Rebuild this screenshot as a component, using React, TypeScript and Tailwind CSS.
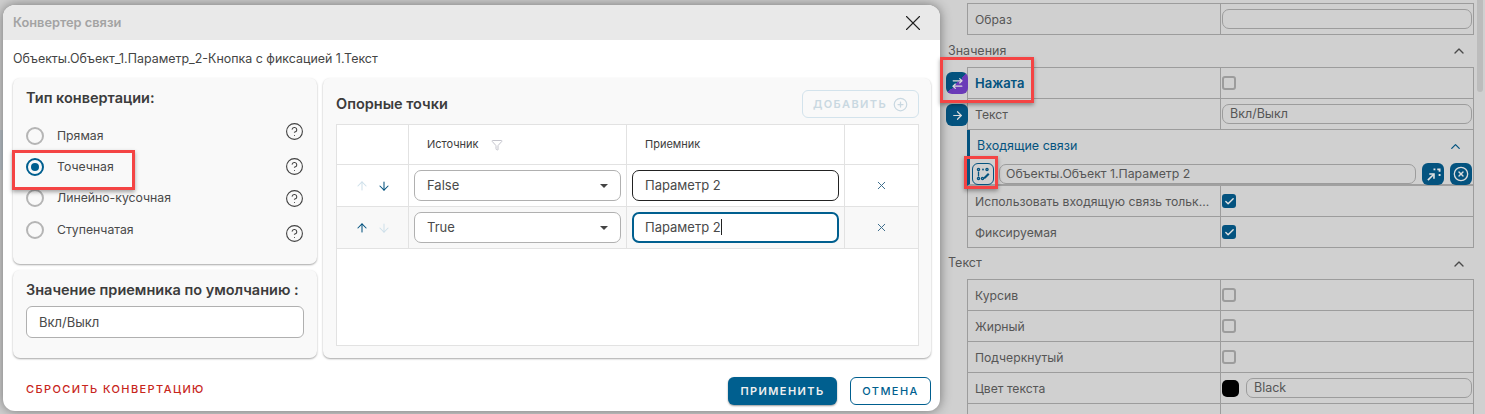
import { ArrowDown, ArrowRight, ArrowRightLeft, ArrowUp, Check, ChevronUp, CircleHelp, CirclePlus, CircleX, Funnel, X } from 'lucide-react';
import type { ReactNode } from 'react';

const font = { fontFamily: 'Inter, "Noto Sans", sans-serif' };

// Icon of the incoming link button: nodes, a path and a small pencil
function RouteEditIcon() {
  return (
    <svg width="14" height="14" viewBox="0 0 14 14" fill="none" stroke="currentColor" strokeWidth="1.3">
      <circle cx="2.5" cy="2.5" r="1.1" />
      <circle cx="2.5" cy="11.5" r="1.1" />
      <circle cx="6.5" cy="11.5" r="1.1" />
      <path d="M2.5 4.5v5" />
      <circle cx="7" cy="2.5" r="0.9" fill="currentColor" stroke="none" />
      <circle cx="11" cy="2.5" r="1.1" />
      <path d="M8 10l4-4 1.5 1.5-4 4-2 .5z" fill="currentColor" stroke="none" />
    </svg>
  );
}

// Arrow towards a dotted corner on the first blue button
function LinkTargetIcon() {
  return (
    <svg width="15" height="15" viewBox="0 0 16 16" fill="none" stroke="#e4e4e4" strokeWidth="1.7">
      <path d="M2 14l6-6" />
      <path d="M3.5 7.5h5v5" />
      <path d="M8 2.5h2M12 2.5h2.5V5M14.5 7.5v2" strokeWidth="2" />
    </svg>
  );
}

function Row({ label, children, blue }: { label: string; children?: ReactNode; blue?: boolean }) {
  return (
    <div className="flex h-[31px] border-b border-[#9c9c9c]">
      <div className={`w-[253px] shrink-0 whitespace-nowrap px-[7px] leading-[31px] border-r border-[#9c9c9c] ${blue ? 'text-[13px] font-semibold text-[#04537f]' : 'text-[12.2px] text-[#565656]'}`}>
        {label}
      </div>
      <div className="flex flex-1 items-center gap-[7px] px-[1px]">{children}</div>
    </div>
  );
}

function Box({ checked }: { checked?: boolean }) {
  if (checked) {
    return (
      <span className="flex h-[14px] w-[14px] items-center justify-center rounded-[3px] bg-[#04537f]">
        <Check size={11} strokeWidth={3} className="text-[#e2e2e2]" />
      </span>
    );
  }
  return <span className="h-[14px] w-[14px] rounded-[3px] border-2 border-[#9c9c9c]" />;
}

function Field({ text }: { text?: string }) {
  return (
    <div className="h-[20px] flex-1 rounded-[7px] border border-[#9c9c9c] px-[7px] text-[12.5px] leading-[18px] text-[#565656]">
      {text}
    </div>
  );
}

function SectionTitle({ title, height }: { title: string; height: string }) {
  return (
    <div className={`flex items-center justify-between pr-[7px] text-[12.5px] text-[#565656] ${height}`}>
      <span>{title}</span>
      <ChevronUp size={16} className="text-[#4a4a4a]" />
    </div>
  );
}

function PropertyPanel() {
  return (
    <div className="ml-[948px] w-[526px] pt-[3px]">
      <div className="ml-[19px] border border-[#9c9c9c] border-b-0">
        <Row label="Образ"><Field /></Row>
      </div>
      <SectionTitle title="Значения" height="h-[32px]" />
      <div className="relative ml-[19px] border border-[#9c9c9c] border-b-0">
        <div className="absolute left-[-22px] top-[4px] flex h-[22px] w-[22px] items-center justify-center rounded-[6px] bg-[linear-gradient(135deg,#04537f_50%,#6a3bb8_50%)]">
          <ArrowRightLeft size={13} strokeWidth={2.2} className="text-[#dcdcdc]" />
        </div>
        <div className="absolute left-[-22px] top-[36px] flex h-[22px] w-[22px] items-center justify-center rounded-[6px] bg-[#04537f]">
          <ArrowRight size={13} strokeWidth={2.2} className="text-[#dcdcdc]" />
        </div>
        <Row label="Нажата" blue><Box /></Row>
        <Row label="Текст"><Field text="Вкл/Выкл" /></Row>
        <div className="relative -ml-[1px] h-[56px] border-b-2 border-l-[3px] border-b-[#a0a0a0] border-l-[#04537f]">
          <div className="flex h-[33px] items-center justify-between pl-[7px] pr-[10px] text-[12.5px] text-[#04537f]">
            <span>Входящие связи</span>
            <ChevronUp size={15} />
          </div>
          <div className="flex items-center pl-[2px] pr-[1px]">
            <div className="flex h-[22px] w-[22px] items-center justify-center rounded-[6px] border border-[#04537f] text-[#04537f]">
              <RouteEditIcon />
            </div>
            <div className="ml-[5px] h-[20px] flex-1 truncate rounded-[7px] border border-[#9c9c9c] px-[6px] text-[12.3px] leading-[18px] text-[#565656]">
              Объекты.Объект 1.Параметр 2
            </div>
            <div className="ml-[6px] flex h-[22px] w-[22px] items-center justify-center rounded-[6px] bg-[#04537f]">
              <LinkTargetIcon />
            </div>
            <div className="ml-[6px] flex h-[22px] w-[22px] items-center justify-center rounded-[6px] bg-[#04537f]">
              <CircleX size={16} className="text-[#dcdcdc]" />
            </div>
          </div>
        </div>
        <Row label="Использовать входящую связь тольк..."><Box checked /></Row>
        <Row label="Фиксируемая"><Box checked /></Row>
      </div>
      <SectionTitle title="Текст" height="h-[31px]" />
      <div className="ml-[19px] border border-[#9c9c9c] border-b-0">
        <Row label="Курсив"><Box /></Row>
        <Row label="Жирный"><Box /></Row>
        <Row label="Подчеркнутый"><Box /></Row>
        <Row label="Цвет текста">
          <span className="h-[17px] w-[17px] rounded-[5px] bg-black" />
          <Field text="Black" />
        </Row>
        <Row label=""><div className="mt-[12px] w-full"><Field /></div></Row>
      </div>
    </div>
  );
}

function RadioOption({ label, checked, helpOffset }: { label: string; checked?: boolean; helpOffset: string }) {
  return (
    <div className="flex h-[31.4px] items-center text-[12.25px] text-[#4a4a4a]">
      {checked ? (
        <span className="flex h-[18px] w-[18px] items-center justify-center rounded-full border-2 border-[#005f8f]">
          <span className="h-[8px] w-[8px] rounded-full bg-[#005f8f]" />
        </span>
      ) : (
        <span className="h-[18px] w-[18px] rounded-full border-2 border-[#b5b5b5]" />
      )}
      <span className="ml-[13px] flex-1">{label}</span>
      <CircleHelp size={19} strokeWidth={1.4} className={`text-[#444] ${helpOffset}`} />
    </div>
  );
}

function SelectBox({ value }: { value: string }) {
  return (
    <div className="flex h-[31px] w-[207px] items-center justify-between rounded-[7px] border border-[#b0b0b0] bg-white pl-[12px] pr-[12px] text-[13px] text-[#4a4a4a]">
      <span>{value}</span>
      <span className="h-0 w-0 border-x-[4px] border-t-[4px] border-x-transparent border-t-[#444]" />
    </div>
  );
}

function PointRow({ value, upActive, focused, shaded }: { value: string; upActive?: boolean; focused?: boolean; shaded?: boolean }) {
  return (
    <div className={`flex h-[42px] border-b border-[#e2e2e2] ${shaded ? 'bg-[#f8f8f8]' : 'bg-white'}`}>
      <div className="flex w-[72px] items-center justify-center gap-[8px] border-r border-[#e2e2e2]">
        <ArrowUp size={14} strokeWidth={1.8} className={upActive ? 'text-[#04537f]' : 'text-[#cfe0ea]'} />
        <ArrowDown size={14} strokeWidth={1.8} className={upActive ? 'text-[#cfe0ea]' : 'text-[#04537f]'} />
      </div>
      <div className="flex w-[218px] items-center border-r border-[#e2e2e2] pl-[5px]">
        <SelectBox value={value} />
      </div>
      <div className="flex w-[218px] items-center border-r border-[#e2e2e2] pl-[5px]">
        <div className={`h-[31px] w-[207px] rounded-[7px] bg-white text-[13px] text-[#4a4a4a] ${focused ? 'border-2 border-[#005f8f] pl-[11px] leading-[27px]' : 'border border-[#222] pl-[12px] leading-[29px]'}`}>
          Параметр 2{focused && <span className="inline-block h-[16px] w-px translate-y-[3px] bg-[#222]" />}
        </div>
      </div>
      <div className="flex flex-1 items-center justify-center">
        <X size={13} strokeWidth={1.8} className="text-[#3b6b8a]" />
      </div>
    </div>
  );
}

function ConverterDialog() {
  return (
    <div className="absolute left-[3px] top-[5px] flex h-[406px] w-[937px] flex-col overflow-hidden rounded-[12px] bg-white shadow-[0_0_12px_rgba(0,0,0,0.45)]">
      <div className="flex h-[35px] shrink-0 items-center justify-between bg-[#e9e9e9] pl-[10px] pr-[14px]">
        <span className="text-[12.8px] font-semibold text-[#a3a3a3]">Конвертер связи</span>
        <X size={26} strokeWidth={1} className="text-[#222]" />
      </div>
      <div className="flex h-[38px] shrink-0 items-center pl-[10px] text-[12.45px] text-[#444]">
        Объекты.Объект_1.Параметр_2-Кнопка с фиксацией 1.Текст
      </div>
      <div className="flex h-[280px] shrink-0 gap-[6px] pl-[10px]">
        <div className="flex w-[304px] flex-col gap-[6px]">
          <div className="h-[186px] rounded-[7px] bg-[#f9f9f9] px-[13px] pt-[11px] shadow-[0_1px_2px_rgba(0,0,0,0.35)]">
            <div className="text-[14.5px] font-semibold leading-[18px] text-[#3c3c3c]">Тип конвертации:</div>
            <div className="mt-[13px]">
              <RadioOption label="Прямая" helpOffset="-translate-y-[4px]" />
              <RadioOption label="Точечная" checked helpOffset="-translate-y-[1px]" />
              <RadioOption label="Линейно-кусочная" helpOffset="translate-y-0" />
              <RadioOption label="Ступенчатая" helpOffset="translate-y-[4px]" />
            </div>
          </div>
          <div className="h-[88px] rounded-[7px] bg-[#f9f9f9] px-[13px] pt-[11px] shadow-[0_1px_2px_rgba(0,0,0,0.35)]">
            <div className="whitespace-nowrap text-[14.5px] font-semibold leading-[18px] text-[#3c3c3c]">Значение приемника по умолчанию :</div>
            <div className="mt-[7px] h-[32px] rounded-[6px] border border-[#b0b0b0] bg-white pl-[12px] text-[13px] leading-[30px] text-[#4a4a4a]">
              Вкл/Выкл
            </div>
          </div>
        </div>
        <div className="w-[608px] rounded-[7px] bg-[#f9f9f9] pl-[13px] pr-[12px] pt-[12px] shadow-[0_1px_2px_rgba(0,0,0,0.35)]">
          <div className="flex h-[28px] items-center justify-between">
            <span className="text-[14.5px] font-semibold text-[#3c3c3c]">Опорные точки</span>
            <div className="flex h-[28px] w-[117px] items-center justify-center gap-[6px] rounded-[6px] border border-[#d3e3ec] text-[11px] font-semibold tracking-[1.4px] text-[#c9d8e1]">
              ДОБАВИТЬ
              <CirclePlus size={15} />
            </div>
          </div>
          <div className="mt-[6px] h-[222px] border border-[#e2e2e2] bg-white">
            <div className="flex h-[40px] border-b border-[#e2e2e2] text-[11px] text-[#3c3c3c]">
              <div className="w-[72px] border-r border-[#e2e2e2]" />
              <div className="flex w-[218px] items-center gap-[12px] border-r border-[#e2e2e2] pl-[18px]">
                Источник
                <Funnel size={12} className="text-[#c4c4cc]" />
              </div>
              <div className="flex w-[218px] items-center border-r border-[#e2e2e2] pl-[18px]">Приемник</div>
            </div>
            <PointRow value="False" />
            <PointRow value="True" upActive focused shaded />
          </div>
        </div>
      </div>
      <div className="flex flex-1 items-start justify-between pl-[23px] pr-[9px] pt-[19px]">
        <span className="mt-[4px] text-[11px] font-medium tracking-[1.4px] text-[#c8261c]">СБРОСИТЬ КОНВЕРТАЦИЮ</span>
        <div className="flex gap-[13px]">
          <div className="flex h-[28px] w-[109px] items-center justify-center rounded-[6px] bg-[#005f8f] text-[11px] font-semibold tracking-[1.4px] text-[#f0f0f0] shadow-[0_1px_2px_rgba(0,0,0,0.4)]">
            ПРИМЕНИТЬ
          </div>
          <div className="flex h-[28px] w-[81px] items-center justify-center rounded-[6px] border border-[#005f8f] text-[11px] font-medium tracking-[1.4px] text-[#005f8f]">
            ОТМЕНА
          </div>
        </div>
      </div>
    </div>
  );
}

export default function App() {
  return (
    <div style={font} className="relative h-[414px] w-[1485px] overflow-hidden bg-[#d0d0d0]">
      <PropertyPanel />
      {/* scrollbar of the panel */}
      <div className="absolute right-[2px] top-0 h-[92px] w-[6px] rounded-b-[3px] bg-[#bcbcbc]" />
      {/* sliver of the page behind the dialog */}
      <div className="absolute left-0 top-[130px] h-[40px] w-[3px] bg-[#bcc5cc]" />
      <ConverterDialog />
      {/* red callouts drawn over the screen */}
      <div className="absolute left-[12px] top-[150px] h-[40px] w-[123px] border-[3px] border-[#f44444] shadow-[0_2px_4px_rgba(0,0,0,0.35)]" />
      <div className="absolute left-[940px] top-[57px] h-[46px] w-[94px] border-[3px] border-[#f44444] shadow-[0_2px_4px_rgba(0,0,0,0.35)]" />
      <div className="absolute left-[964px] top-[156px] h-[33px] w-[34px] border-[3px] border-[#f44444] shadow-[0_2px_4px_rgba(0,0,0,0.35)]" />
    </div>
  );
}
